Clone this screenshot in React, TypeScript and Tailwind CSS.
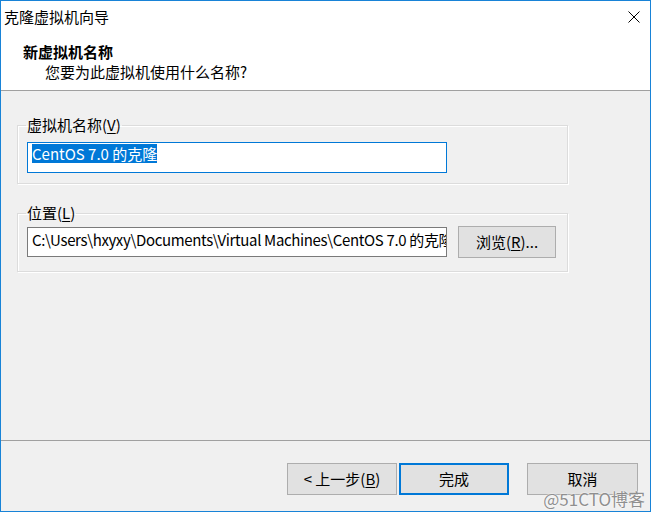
function Underlined({ children }: { children: string }) {
  return <span className="underline underline-offset-2">{children}</span>;
}

function GroupBox({
  label,
  hotkey,
  className,
  children,
}: {
  label: string;
  hotkey: string;
  className?: string;
  children: React.ReactNode;
}) {
  return (
    <fieldset
      className={`w-[551px] border border-[#dcdcdc] pl-[9px] shadow-[inset_1px_1px_0_#ffffff,1px_1px_0_#ffffff] ${className || ""}`}
    >
      <legend className="px-[1px] -ml-[1px] leading-[20px]">
        {label}(<Underlined>{hotkey}</Underlined>)
      </legend>
      {children}
    </fieldset>
  );
}

function WinButton({
  children,
  primary,
  className,
}: {
  children: React.ReactNode;
  primary?: boolean;
  className?: string;
}) {
  return (
    <div
      className={`h-[32px] flex items-center justify-center bg-[#e1e1e1] ${
        primary ? "border-2 border-[#0078d7]" : "border border-[#adadad]"
      } ${className || ""}`}
    >
      {children}
    </div>
  );
}

export default function App() {
  return (
    <div className="relative w-[655px] h-[513px] bg-white text-[15px] leading-[20px] text-black font-['Noto_Sans_CJK_SC',sans-serif]">
      <div className="w-[651px] h-[512px] border border-[#1883d7] flex flex-col">
        {/* title bar */}
        <div className="h-[32px] flex items-center justify-between pl-[3px] pr-[10px] bg-white">
          <span>克隆虚拟机向导</span>
          <svg width="12" height="12" viewBox="0 0 12 12">
            <path d="M0.5 0.5 L11.5 11.5 M11.5 0.5 L0.5 11.5" stroke="#000" strokeWidth="1" />
          </svg>
        </div>

        {/* wizard header */}
        <div className="h-[58px] bg-white border-b border-[#a0a0a0] pl-[22px] pt-[9px]">
          <div className="font-bold">新虚拟机名称</div>
          <div className="ml-[22px]">您要为此虚拟机使用什么名称?</div>
        </div>

        {/* content */}
        <div className="flex-1 bg-[#f0f0f0] px-[16px]">
          <GroupBox label="虚拟机名称" hotkey="V" className="mt-[24px] pt-[7px] pb-[10px]">
            <div className="w-[420px] h-[31px] border border-[#0078d7] bg-white pl-[4px] pt-[1px]">
              <span className="inline-block leading-[19px] bg-[#0078d7] text-white">
                CentOS 7.0 的克隆
              </span>
            </div>
          </GroupBox>

          <GroupBox label="位置" hotkey="L" className="mt-[19px] pt-[3px] pb-[13px]">
            <div className="flex items-center gap-[11px]">
              <div className="w-[420px] h-[30px] border border-[#7a7a7a] bg-white pl-[4px] pt-[2px] overflow-hidden whitespace-nowrap tracking-[-0.35px]">
                C:\Users\hxyxy\Documents\Virtual Machines\CentOS 7.0 的克隆
              </div>
              <WinButton className="w-[98px] h-[30px]">
                浏览(<Underlined>R</Underlined>)...
              </WinButton>
            </div>
          </GroupBox>
        </div>

        {/* footer */}
        <div className="h-[71px] bg-[#f0f0f0] border-t border-[#a0a0a0] flex justify-end items-start pt-[22px] pr-[12px]">
          <WinButton className="w-[110px]">
            &lt; 上一步(<Underlined>B</Underlined>)
          </WinButton>
          <WinButton primary className="w-[110px] ml-[2px]">
            完成
          </WinButton>
          <WinButton className="w-[111px] ml-[18px]">取消</WinButton>
        </div>
      </div>

      {/* watermark */}
      <div className="absolute right-[10px] bottom-[4px] text-[17px] leading-[20px] text-[#8f8f8f] [text-shadow:0_0_2px_#ffffff,0_0_1px_#ffffff]">
        @51CTO博客
      </div>
    </div>
  );
}
